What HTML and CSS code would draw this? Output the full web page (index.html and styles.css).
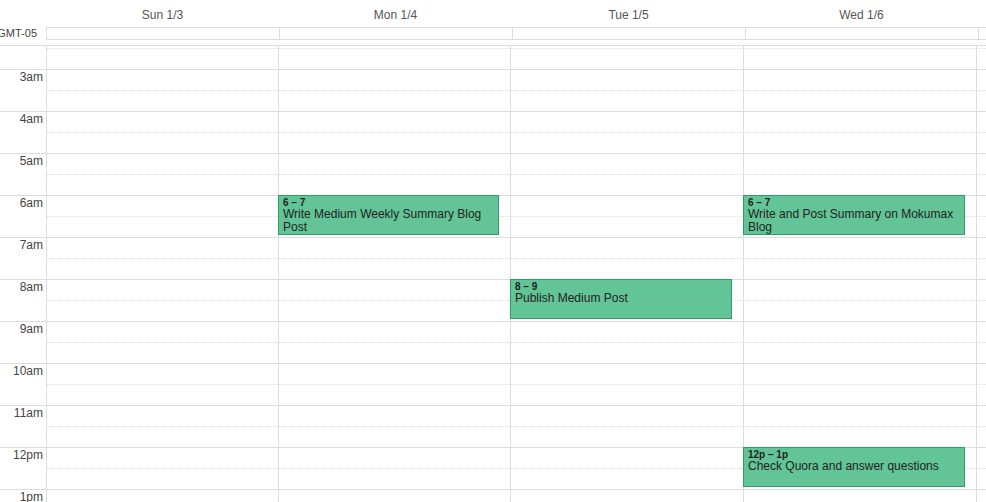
FILE: index.html
```html
<!DOCTYPE html>
<html>
<head>
<meta charset="utf-8">
<link rel="stylesheet" href="styles.css">
</head>
<body>
<div class="cal">
  <div class="head">
    <div class="head-gutter"></div>
    <div class="day">Sun 1/3</div>
    <div class="day">Mon 1/4</div>
    <div class="day">Tue 1/5</div>
    <div class="day">Wed 1/6</div>
    <div class="day"></div>
  </div>
  <div class="allday">
    <div class="tz">GMT-05</div>
    <div class="ad-cells">
      <div class="ad-cell"></div>
      <div class="ad-cell"></div>
      <div class="ad-cell"></div>
      <div class="ad-cell"></div>
      <div class="ad-cell tail"></div>
    </div>
  </div>
  <div class="divider"></div>
  <div class="body">
    <div class="slats">
      <div class="slot lead"></div>
      <div class="slot half"></div>
      <div class="slot hour"><span class="lbl">3am</span></div>
      <div class="slot half"></div>
      <div class="slot hour"><span class="lbl">4am</span></div>
      <div class="slot half"></div>
      <div class="slot hour"><span class="lbl">5am</span></div>
      <div class="slot half"></div>
      <div class="slot hour"><span class="lbl">6am</span></div>
      <div class="slot half"></div>
      <div class="slot hour"><span class="lbl">7am</span></div>
      <div class="slot half"></div>
      <div class="slot hour"><span class="lbl">8am</span></div>
      <div class="slot half"></div>
      <div class="slot hour"><span class="lbl">9am</span></div>
      <div class="slot half"></div>
      <div class="slot hour"><span class="lbl">10am</span></div>
      <div class="slot half"></div>
      <div class="slot hour"><span class="lbl">11am</span></div>
      <div class="slot half"></div>
      <div class="slot hour"><span class="lbl">12pm</span></div>
      <div class="slot half"></div>
      <div class="slot hour"><span class="lbl">1pm</span></div>
      <div class="slot half"></div>
      <div class="slot hour"><span class="lbl">2pm</span></div>
    </div>
    <div class="cols">
      <div class="col"></div>
      <div class="col">
        <div class="event" style="top:149px">
          <div class="ev-time">6 – 7</div>
          <div class="ev-title">Write Medium Weekly Summary Blog Post</div>
        </div>
      </div>
      <div class="col">
        <div class="event" style="top:233px">
          <div class="ev-time">8 – 9</div>
          <div class="ev-title">Publish Medium Post</div>
        </div>
      </div>
      <div class="col">
        <div class="event" style="top:149px">
          <div class="ev-time">6 – 7</div>
          <div class="ev-title">Write and Post Summary on Mokumax Blog</div>
        </div>
        <div class="event" style="top:401px">
          <div class="ev-time">12p – 1p</div>
          <div class="ev-title">Check Quora and answer questions</div>
        </div>
      </div>
      <div class="col"></div>
    </div>
  </div>
</div>
</body>
</html>
```

FILE: styles.css
```css
* { box-sizing: border-box; }
html, body { margin: 0; padding: 0; background: #fff; }
body {
  font-family: "Liberation Sans", Arial, sans-serif;
  color: #444;
  width: 986px;
  height: 502px;
  overflow: hidden;
}
.cal { width: 986px; }

.head {
  display: grid;
  grid-template-columns: 46px repeat(4, 233px) 1fr;
  height: 27px;
}
.day {
  font-size: 12px;
  text-align: center;
  padding-top: 3px;
  line-height: 24px;
  color: #555;
}

.allday {
  display: flex;
  height: 13px;
}
.tz {
  width: 46px;
  flex: none;
  font-size: 11px;
  line-height: 13px;
  text-align: right;
  padding-right: 9px;
  white-space: nowrap;
  overflow: visible;
  direction: rtl;
  color: #444;
}
.ad-cells {
  flex: 1;
  display: flex;
  border-top: 1px solid #ddd;
  border-bottom: 1px solid #ddd;
}
.ad-cell {
  width: 233px;
  flex: none;
  border-left: 1px solid #ddd;
}
.ad-cell.tail { flex: 1; width: auto; }

.divider { height: 5px; }

.body {
  position: relative;
  height: 457px;
  overflow: hidden;
  border-top: 1px solid #ddd;
}
.slot { height: 21px; }
.slot.lead { height: 2px; }
.slot.half {
  margin-left: 47px;
  border-top: 1px dotted #ddd;
}
.slot.hour {
  border-top: 1px solid #ddd;
}
.lbl {
  display: block;
  width: 46px;
  text-align: right;
  padding-right: 3px;
  font-size: 12px;
  line-height: 14px;
  color: #444;
}

.cols {
  position: absolute;
  top: 0;
  left: 46px;
  right: 0;
  bottom: 0;
  display: grid;
  grid-template-columns: 232px 232px 233px 233px 1fr;
}
.col {
  position: relative;
  border-left: 1px solid #ddd;
}
.event {
  position: absolute;
  left: -1px;
  right: 11px;
  height: 40px;
  background: #63c497;
  border: 1px solid #2f9e62;
  padding: 2px 4px 0;
  overflow: hidden;
  color: #222;
}
.ev-time {
  font-size: 10px;
  font-weight: bold;
  line-height: 10px;
  white-space: nowrap;
}
.ev-title {
  font-size: 12px;
  line-height: 13px;
}
```
